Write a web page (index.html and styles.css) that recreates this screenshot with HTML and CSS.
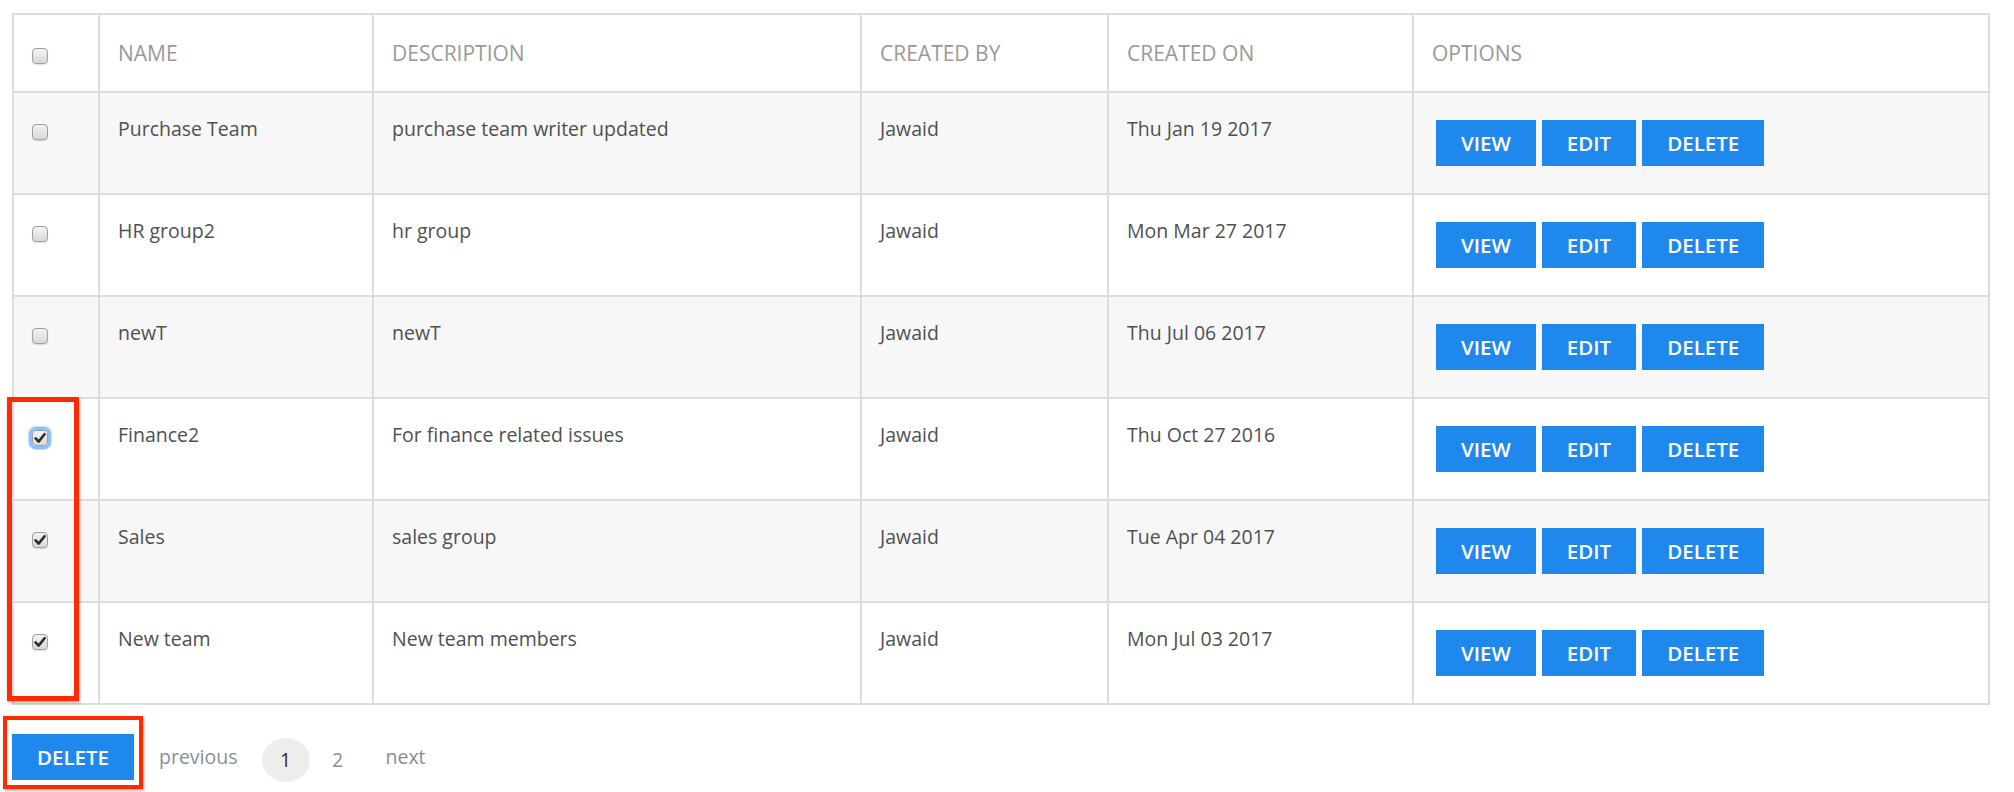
FILE: index.html
```html
<!DOCTYPE html>
<html lang="en">
<head>
<meta charset="utf-8">
<title>Teams</title>
<link rel="stylesheet" href="styles.css">
</head>
<body>
<div class="page">
  <table class="grid">
    <thead>
      <tr class="head">
        <th class="c-check"><span class="cb"></span></th>
        <th class="c-name">NAME</th>
        <th class="c-desc">DESCRIPTION</th>
        <th class="c-by">CREATED BY</th>
        <th class="c-on">CREATED ON</th>
        <th class="c-opt">OPTIONS</th>
      </tr>
    </thead>
    <tbody>
      <tr class="stripe">
        <td class="c-check"><span class="cb"></span></td>
        <td>Purchase Team</td>
        <td>purchase team writer updated</td>
        <td>Jawaid</td>
        <td>Thu Jan 19 2017</td>
        <td class="opt"><div class="actions"><button class="btn">VIEW</button><button class="btn">EDIT</button><button class="btn">DELETE</button></div></td>
      </tr>
      <tr>
        <td class="c-check"><span class="cb"></span></td>
        <td>HR group2</td>
        <td>hr group</td>
        <td>Jawaid</td>
        <td>Mon Mar 27 2017</td>
        <td class="opt"><div class="actions"><button class="btn">VIEW</button><button class="btn">EDIT</button><button class="btn">DELETE</button></div></td>
      </tr>
      <tr class="stripe">
        <td class="c-check"><span class="cb"></span></td>
        <td>newT</td>
        <td>newT</td>
        <td>Jawaid</td>
        <td>Thu Jul 06 2017</td>
        <td class="opt"><div class="actions"><button class="btn">VIEW</button><button class="btn">EDIT</button><button class="btn">DELETE</button></div></td>
      </tr>
      <tr>
        <td class="c-check"><span class="cb checked focus"><svg viewBox="0 0 16 16" class="tick"><path d="M3.6 8.4 L6.6 11.6 L12.6 4.2"/></svg></span></td>
        <td>Finance2</td>
        <td>For finance related issues</td>
        <td>Jawaid</td>
        <td>Thu Oct 27 2016</td>
        <td class="opt"><div class="actions"><button class="btn">VIEW</button><button class="btn">EDIT</button><button class="btn">DELETE</button></div></td>
      </tr>
      <tr class="stripe">
        <td class="c-check"><span class="cb checked"><svg viewBox="0 0 16 16" class="tick"><path d="M3.6 8.4 L6.6 11.6 L12.6 4.2"/></svg></span></td>
        <td>Sales</td>
        <td>sales group</td>
        <td>Jawaid</td>
        <td>Tue Apr 04 2017</td>
        <td class="opt"><div class="actions"><button class="btn">VIEW</button><button class="btn">EDIT</button><button class="btn">DELETE</button></div></td>
      </tr>
      <tr>
        <td class="c-check"><span class="cb checked"><svg viewBox="0 0 16 16" class="tick"><path d="M3.6 8.4 L6.6 11.6 L12.6 4.2"/></svg></span></td>
        <td>New team</td>
        <td>New team members</td>
        <td>Jawaid</td>
        <td>Mon Jul 03 2017</td>
        <td class="opt"><div class="actions"><button class="btn">VIEW</button><button class="btn">EDIT</button><button class="btn">DELETE</button></div></td>
      </tr>
    </tbody>
  </table>

  <div class="footer">
    <button class="btn btn-bulk">DELETE</button>
    <nav class="pager">
      <span class="pg-link">previous</span>
      <span class="pg-num current">1</span>
      <span class="pg-num">2</span>
      <span class="pg-link">next</span>
    </nav>
  </div>

  <div class="mark mark-checks"></div>
  <div class="mark mark-delete"></div>
</div>
</body>
</html>
```

FILE: styles.css
```css
* { box-sizing: border-box; }

html, body {
  margin: 0;
  padding: 0;
  background: #ffffff;
}

body {
  font-family: "Open Sans", "Liberation Sans", sans-serif;
  color: #505050;
}

.page {
  position: relative;
  padding: 13px 0 0 12px;
  width: 2014px;
  height: 792px;
  overflow: hidden;
}

/* ---------- table ---------- */
.grid {
  box-sizing: border-box;
  width: 1978px;
  table-layout: fixed;
  border-collapse: separate;
  border-spacing: 0;
  border-top: 2px solid #dddddd;
  border-left: 2px solid #dddddd;
}

.grid th,
.grid td {
  box-sizing: border-box;
  border-right: 2px solid #dddddd;
  border-bottom: 2px solid #dddddd;
  vertical-align: top;
  text-align: left;
  padding: 23px 18px 0 18px;
  font-size: 19.5px;
  line-height: 1.36;
  font-weight: 400;
  color: #505050;
  white-space: nowrap;
}

.grid th {
  padding-top: 24px;
  font-size: 21px;
  color: #999999;
}

.head { height: 78px; }
.grid tbody tr { height: 102px; }
.grid tbody tr.stripe { background: #f7f7f7; }

.c-check { width: 86px; }
.c-name  { width: 274px; }
.c-desc  { width: 488px; }
.c-by    { width: 247px; }
.c-on    { width: 305px; }
.c-opt   { width: 576px; }

.grid th.c-check { padding: 33px 0 0 18px; }
.grid td.c-check { padding: 31px 0 0 18px; }

.grid td.opt { padding: 27px 0 0 22px; }

.actions {
  display: flex;
  gap: 6px;
}

/* ---------- checkbox ---------- */
.cb {
  position: relative;
  display: block;
  width: 16px;
  height: 16px;
  border: 1px solid #9f9f9f;
  border-radius: 4px;
  background: linear-gradient(#f2f2f2, #dadada);
  box-shadow: 0 1px 1px rgba(0, 0, 0, 0.12);
}

.cb.focus {
  box-shadow: 0 0 0 3px #8cc0f7, 0 0 1px 4px rgba(140, 192, 247, 0.5);
}

.tick {
  position: absolute;
  left: -1px;
  top: -1px;
  width: 16px;
  height: 16px;
}

.tick path {
  fill: none;
  stroke: #2b2b2b;
  stroke-width: 2.6;
  stroke-linecap: round;
  stroke-linejoin: round;
}

/* ---------- buttons ---------- */
.btn {
  display: block;
  height: 46px;
  padding: 0 25px;
  border: 0;
  border-radius: 0;
  background: #1f88ed;
  color: #ffffff;
  font-family: "Open Sans", "Liberation Sans", sans-serif;
  font-size: 20.5px;
  line-height: 46px;
  font-weight: 600;
  white-space: nowrap;
}

.btn-bulk { width: 122px; padding: 0; text-align: center; }

/* ---------- footer / pager ---------- */
.footer {
  display: flex;
  align-items: center;
  margin-top: 27px;
}

.pager {
  display: flex;
  align-items: center;
  margin-left: 25px;
  font-size: 19.5px;
  line-height: 1.36;
}

.pg-link {
  color: #878e98;
}

.pg-num {
  display: flex;
  align-items: center;
  justify-content: center;
  width: 48px;
  height: 44px;
  margin-top: 6px;
  border-radius: 50%;
  color: #878e98;
}

.pg-num.current {
  margin-left: 24px;
  margin-right: 4px;
  background: #ededed;
  color: #333333;
}

.pg-num + .pg-link { margin-left: 24px; }

/* ---------- annotation marks ---------- */
.mark {
  position: absolute;
  border: 4px solid #ff2a00;
  box-shadow: 1px 2px 3px rgba(0, 0, 0, 0.3);
}

.mark-checks {
  left: 7px;
  top: 397px;
  width: 72px;
  height: 304px;
  border-width: 5px;
}

.mark-delete {
  left: 3px;
  top: 716px;
  width: 140px;
  height: 73px;
}
```
